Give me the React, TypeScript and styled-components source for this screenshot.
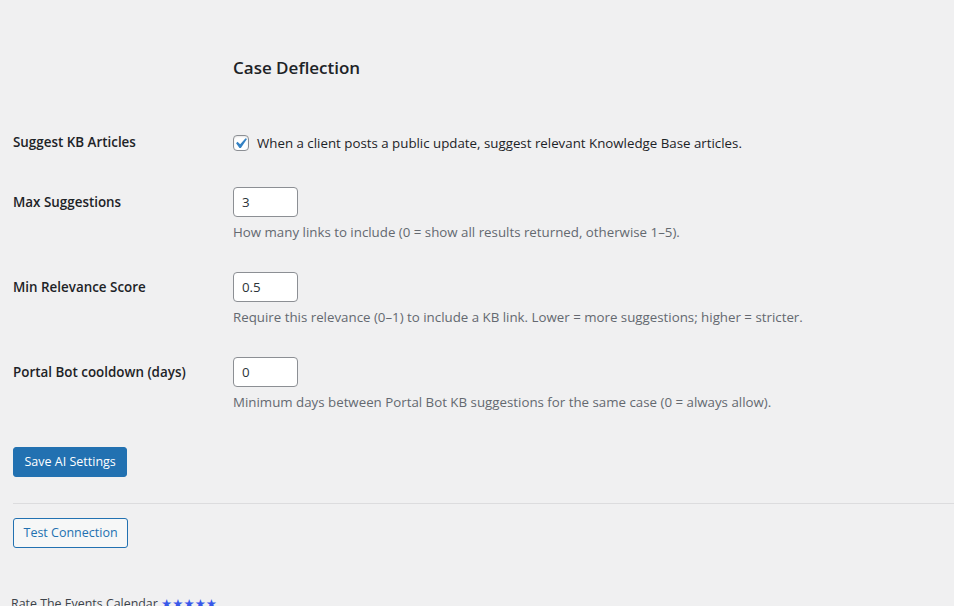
import styled, { createGlobalStyle } from "styled-components";

const GlobalStyle = createGlobalStyle`
  html, body {
    margin: 0;
    padding: 0;
    background: #f0f0f1;
  }
  body {
    color: #1d2327;
    font-family: "Open Sans", "Noto Sans", sans-serif;
    font-size: 13.3px;
    line-height: 1.4;
  }
`;

const Page = styled.div`
  padding: 0 0 0 13px;
  overflow: hidden;
`;

const Heading = styled.h2`
  margin: 56px 0 34px 220px;
  font-size: 17px;
  font-weight: 600;
  line-height: 24px;
  color: #1d2327;
`;

const Row = styled.div`
  display: grid;
  grid-template-columns: 220px 1fr;
`;

const Label = styled.div`
  padding: 20px 10px 20px 0;
  font-size: 13.4px;
  font-weight: 600;
  line-height: 17px;
`;

const Field = styled.div<{ $top?: number; $bottom?: number }>`
  padding: ${(p) => p.$top ?? 14}px 0 ${(p) => p.$bottom ?? 16}px;
  font-size: 13.3px;
`;

const CheckLine = styled.label`
  display: flex;
  align-items: center;
  gap: 8px;
  height: 30px;
`;

const Box = styled.span`
  position: relative;
  box-sizing: border-box;
  width: 16px;
  height: 16px;
  border: 1px solid #8c8f94;
  border-radius: 4px;
  background: #fff;
  box-shadow: inset 0 1px 2px rgba(0, 0, 0, 0.1);
  flex: none;

  svg {
    position: absolute;
    left: -4px;
    top: -3px;
  }
`;

const NumberInput = styled.input`
  box-sizing: border-box;
  display: block;
  width: 65px;
  height: 30px;
  padding: 0 8px;
  border: 1px solid #8c8f94;
  border-radius: 4px;
  background: #fff;
  color: #2c3338;
  font-family: inherit;
  font-size: 13.3px;
  outline: none;
`;

const Description = styled.p`
  margin: 5px 0 0;
  color: #646970;
  font-size: 13.3px;
  line-height: 20px;
`;

const Submit = styled.div`
  padding-top: 18px;
`;

const Button = styled.button<{ $primary?: boolean }>`
  box-sizing: border-box;
  display: inline-block;
  height: 30px;
  padding: 0 ${(p) => (p.$primary ? 10.5 : 9.5)}px;
  border: 1px solid #2271b1;
  border-radius: 3px;
  background: ${(p) => (p.$primary ? "#2271b1" : "#f6f7f7")};
  color: ${(p) => (p.$primary ? "#fff" : "#2271b1")};
  font-family: inherit;
  font-size: 12.5px;
  line-height: 28px;
  cursor: pointer;
`;

const Divider = styled.hr`
  margin: 26px 0 14px;
  border: 0;
  border-top: 1px solid #dcdcde;
`;

const Footer = styled.div`
  margin: 47px 0 0 -2px;
  color: #3c434a;
  font-size: 12.4px;
  line-height: 18px;
`;

const Stars = styled.span`
  color: #3858e9;
  font-family: "DejaVu Sans", sans-serif;
  font-size: 12.5px;
`;

const Check = () => (
  <Box>
    <svg width="21" height="21" viewBox="0 0 20 20">
      <path
        fill="#3582c4"
        d="M14.83 4.89l1.34.94-5.81 8.38H9.02L5.78 9.67l1.34-1.25 2.57 2.4z"
      />
    </svg>
  </Box>
);

const numberRows = [
  {
    label: "Max Suggestions",
    value: "3",
    help: "How many links to include (0 = show all results returned, otherwise 1–5).",
  },
  {
    label: "Min Relevance Score",
    value: "0.5",
    help: "Require this relevance (0–1) to include a KB link. Lower = more suggestions; higher = stricter.",
  },
  {
    label: "Portal Bot cooldown (days)",
    value: "0",
    help: "Minimum days between Portal Bot KB suggestions for the same case (0 = always allow).",
  },
];

export default function App() {
  return (
    <>
      <GlobalStyle />
      <Page>
        <Heading>Case Deflection</Heading>
        <Row>
          <Label>Suggest KB Articles</Label>
          <Field>
            <CheckLine>
              <Check />
              When a client posts a public update, suggest relevant Knowledge Base articles.
            </CheckLine>
          </Field>
        </Row>
        {numberRows.map((r) => (
          <Row key={r.label}>
            <Label>{r.label}</Label>
            <Field $top={13} $bottom={17}>
              <NumberInput type="text" defaultValue={r.value} />
              <Description>{r.help}</Description>
            </Field>
          </Row>
        ))}
        <Submit>
          <Button $primary>Save AI Settings</Button>
        </Submit>
        <Divider />
        <Button>Test Connection</Button>
        <Footer>
          Rate The Events Calendar <Stars>★★★★★</Stars>
        </Footer>
      </Page>
    </>
  );
}
